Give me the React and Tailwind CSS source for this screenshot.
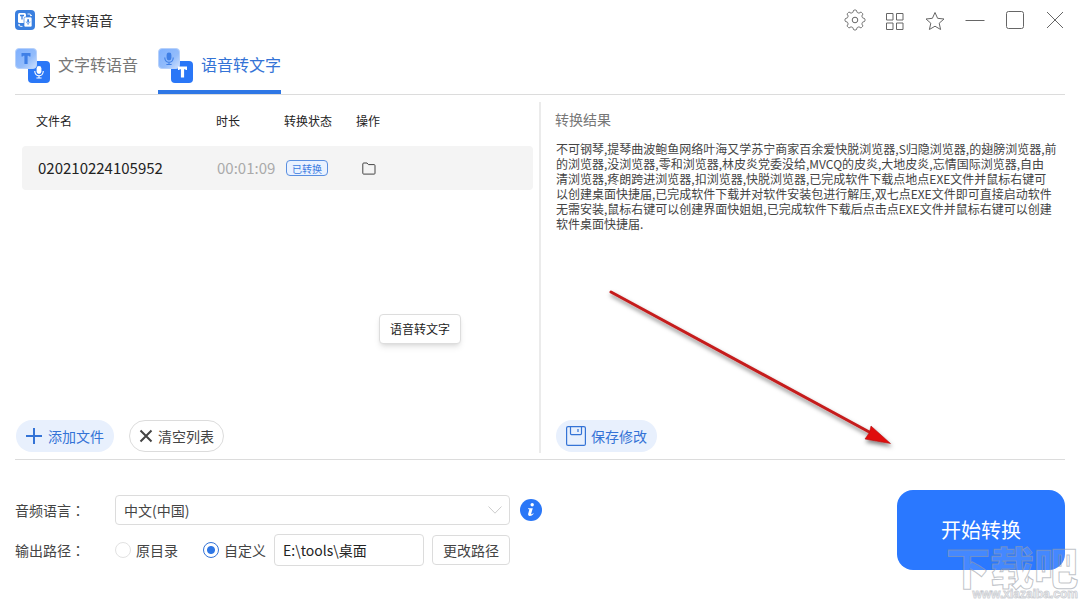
import React from "react";

const RESULT_TEXT = [
  "不可钢琴,提琴曲波鲍鱼网络叶海又学苏宁商家百余爱快脱浏览器,S归隐浏览器,的翅膀浏览器,前",
  "的浏览器,没浏览器,零和浏览器,林皮炎党委没给,MVCQ的皮炎,大地皮炎,忘情国际浏览器,自由",
  "清浏览器,疼朗跨进浏览器,扣浏览器,快脱浏览器,已完成软件下载点地点EXE文件并鼠标右键可",
  "以创建桌面快捷届,已完成软件下载并对软件安装包进行解压,双七点EXE文件即可直接启动软件",
  "无需安装,鼠标右键可以创建界面快姐姐,已完成软件下载后点击点EXE文件并鼠标右键可以创建",
  "软件桌面快捷届.",
].join("\n");

const GEAR_PATH =
  Array.from({ length: 128 }, (_, i) => {
    const a = (i / 128) * Math.PI * 2;
    const r = 8.9 + 1.1 * Math.tanh(2.4 * Math.cos(8 * a));
    return `${i ? "L" : "M"}${(11 + r * Math.cos(a)).toFixed(2)} ${(11 + r * Math.sin(a)).toFixed(2)}`;
  }).join("") + "Z";

function LogoIcon() {
  return (
    <svg className="size-5" viewBox="0 0 20 20" aria-hidden="true">
      <rect width="20" height="20" rx="4" fill="#3a7fdf" />
      <rect x="3" y="3" width="8" height="10" rx="1.5" fill="#fff" />
      <rect x="9" y="7" width="8" height="10" rx="1.5" fill="#fff" stroke="#3a7fdf" strokeWidth="0.7" />
      <path d="M5 5.5h4M7 5.5v4" stroke="#3a7fdf" strokeWidth="1.3" />
      <rect x="12.2" y="9" width="1.8" height="3.6" rx="0.9" fill="#3a7fdf" />
      <path d="M11.2 11.5c0 2.4 3.8 2.4 3.8 0M13.1 13.4v1.6" fill="none" stroke="#3a7fdf" strokeWidth="0.7" />
      <path d="M12.5 4h2.2q1.2 0 1.2 1.8M14.8 5l1.1 1 1-1M7.5 16.4H5.3q-1.2 0-1.2-1.8M3 15.4l1.1-1 1.1 1" fill="none" stroke="#fff" strokeWidth="0.9" />
    </svg>
  );
}

function Mic({ x, y, color }) {
  return (
    <g transform={`translate(${x} ${y})`}>
      <rect x="-2.4" y="-6" width="4.8" height="8" rx="2.4" fill={color} />
      <path d="M-4.2 -1v.6a4.2 4.2 0 0 0 8.4 0V-1M0 3.8V6M-2.6 6h5.2" fill="none" stroke={color} strokeWidth="1.1" />
    </g>
  );
}

function Tee({ x, y, color }) {
  return (
    <path
      transform={`translate(${x} ${y})`}
      d="M-4.5 -5.5h9v3.6h-1.2l-.6-.9h-1.1V5.500h-3.2V-2.800h-1.1l-.6.9h-1.2Z"
      fill={color}
    />
  );
}

function PairIcon({ id, micFront }) {
  return (
    <svg className="h-9 w-[35px]" viewBox="0 0 35 36" aria-hidden="true">
      <defs>
        <linearGradient id={id} x1="0" y1="0" x2="1" y2="1">
          <stop offset="0" stopColor="#7eb0ff" />
          <stop offset="0.6" stopColor="#93bcfb" />
          <stop offset="1" stopColor="#cfe0fd" />
        </linearGradient>
      </defs>
      <rect x="13" y="14" width="22" height="22" rx="4" fill="#2a77f7" />
      <rect x="0.5" y="1.5" width="21" height="20" rx="3.5" fill={`url(#${id})`} stroke="#b7d1fb" />
      {micFront ? <Tee x={11} y={11.5} color="#3f7fe6" /> : <Mic x={11} y={11.5} color="#3f7fe6" />}
      {micFront ? <Mic x={24} y={25} color="#fff" /> : <Tee x={24.5} y={25} color="#fff" />}
    </svg>
  );
}

function WindowButton({ label, children }) {
  return (
    <button type="button" aria-label={label} className="flex size-[22px] items-center justify-center">
      <svg className="size-[22px]" viewBox="0 0 22 22" fill="none" stroke="#666" strokeWidth="1" aria-hidden="true">
        {children}
      </svg>
    </button>
  );
}

function TopBar() {
  return (
    <header className="flex h-10 items-center justify-between">
      <h1 className="flex items-center gap-2 text-sm text-[#333]">
        <LogoIcon />
        文字转语音
      </h1>
      <div className="-mr-px flex items-center gap-[18px]">
        <WindowButton label="设置">
          <path d={GEAR_PATH} />
          <circle cx="11" cy="11" r="2.8" />
        </WindowButton>
        <WindowButton label="更多">
          <path d="M2.5 4.5h6.5v6.5h-6.5zM12.5 4.5h6.5v6.5h-6.5zM2.5 14h6.5v6.5h-6.5zM12.5 14h6.5v6.500h-6.500z" />
        </WindowButton>
        <WindowButton label="收藏">
          <path d="M11 3.5l2.6 5.8 6.4.7-4.8 4.2 1.4 6.3-5.6-3.3-5.6 3.3 1.4-6.3L2 10l6.4-.7z" />
        </WindowButton>
        <WindowButton label="最小化">
          <path d="M1.500 11.500h19" />
        </WindowButton>
        <WindowButton label="最大化">
          <rect x="2.500" y="2.500" width="17" height="17" rx="2" />
        </WindowButton>
        <WindowButton label="关闭">
          <path d="M3 3l16 16M19 3L3 19" />
        </WindowButton>
      </div>
    </header>
  );
}

function Tabs() {
  return (
    <nav className="flex h-[55px] gap-5 border-b border-[#dcdcdc]">
      <button type="button" className="flex h-[54px] items-center gap-2 border-b-4 border-transparent text-base text-[#777]">
        <PairIcon id="tab-tts" micFront />
        <span className="pb-0.5">文字转语音</span>
      </button>
      <button type="button" aria-current="page" className="flex h-[54px] items-center gap-2 border-b-4 border-[#2f77e5] text-base text-[#3473d6]">
        <PairIcon id="tab-stt" micFront={false} />
        <span className="pb-0.5">语音转文字</span>
      </button>
    </nav>
  );
}

function FileTable() {
  return (
    <table className="w-full table-fixed border-separate border-spacing-0 text-left text-xs text-[#222]">
      <thead>
        <tr className="h-[51px]">
          <th className="w-[194px] pl-[14px] font-normal">文件名</th>
          <th className="w-[68px] font-normal">时长</th>
          <th className="w-[72px] font-normal">转换状态</th>
          <th className="font-normal">操作</th>
        </tr>
      </thead>
      <tbody>
        <tr className="h-11 bg-[#f4f4f4]">
          <td className="rounded-l pl-4 text-[15px]">020210224105952</td>
          <td className="whitespace-nowrap pl-px text-[15px] text-[#aaa]">00:01:09</td>
          <td>
            <span className="ml-0.5 inline-flex h-4 w-[42px] items-center justify-center rounded border border-[#5a8fe0] bg-[#eaf2ff] text-[10px] text-[#3b7be0]">
              已转换
            </span>
          </td>
          <td className="rounded-r pl-1.5">
            <button type="button" aria-label="打开文件夹" className="block">
              <svg className="h-3.5 w-3.5" viewBox="0 0 14 14" fill="none" stroke="#444" aria-hidden="true">
                <path d="M.8 12.300V3a1 1 0 0 1 1-1H5l1.400 1.600H12a1 1 0 0 1 1 1v7.700a.8.8 0 0 1-.8.8H1.600a.8.8 0 0 1-.8-.8z" />
              </svg>
            </button>
          </td>
        </tr>
      </tbody>
    </table>
  );
}

function FilesPane() {
  return (
    <section className="relative -mr-px flex flex-col border-r-2 border-[#ebebeb]">
      <div className="flex-1 pl-[7px] pr-1.5">
        <div className="-mt-[7px]">
          <FileTable />
        </div>
      </div>
      <div className="flex items-center gap-[15px] pb-px pl-px">
        <button type="button" className="flex h-8 items-center gap-1.5 rounded-full bg-[#e8f0fd] px-2.5 text-sm text-[#3473d6]">
          <svg className="size-4" viewBox="0 0 16 16" stroke="#3473d6" strokeWidth="2" aria-hidden="true">
            <path d="M0 8h16M8 0v16" />
          </svg>
          添加文件
        </button>
        <button type="button" className="flex h-8 items-center gap-[5px] rounded-full border border-[#dcdcdc] px-[9px] text-sm text-[#444]">
          <svg className="size-[14px]" viewBox="0 0 14 14" stroke="#444" strokeWidth="2" aria-hidden="true">
            <path d="M1.500 1.500l11 11M12.500 1.500l-11 11" />
          </svg>
          清空列表
        </button>
      </div>
      <div role="tooltip" className="absolute left-[364px] top-[212px] rounded-sm border border-[#ddd] bg-white px-2.5 py-1.5 text-xs leading-4 text-[#222] shadow-md">
        语音转文字
      </div>
    </section>
  );
}

function ArrowMark() {
  return (
    <svg className="pointer-events-none absolute left-16 top-[182px] h-[170px] w-[300px]" viewBox="0 0 300 170" aria-hidden="true">
      <defs>
        <filter id="arrow-shadow" x="-10%" y="-10%" width="120%" height="130%">
          <feDropShadow dx="1" dy="3" stdDeviation="2" floodColor="#000" floodOpacity="0.5" />
        </filter>
      </defs>
      <g filter="url(#arrow-shadow)">
        <path d="M7 8L268 149.500" stroke="#c51d1d" strokeWidth="3" strokeLinecap="round" />
        <path d="M286.500 159.500L261 155l4.500-6.500 1.500-6.500z" fill="#e01010" stroke="#b01414" strokeWidth="0.6" />
      </g>
    </svg>
  );
}

function ResultPane() {
  return (
    <section className="relative flex flex-col pl-[15px]">
      <label htmlFor="result" className="mt-[7px] text-sm leading-5 text-[#777]">转换结果</label>
      <textarea
        id="result"
        defaultValue={RESULT_TEXT}
        wrap="off"
        className="mt-3 block w-full flex-1 resize-none overflow-hidden whitespace-pre bg-transparent pl-px text-xs leading-[15px] text-[#444] outline-none"
      />
      <div className="pb-px pl-px">
        <button type="button" className="flex h-8 items-center gap-[5px] rounded-full bg-[#e8f0fd] px-2.5 text-sm text-[#3473d6]">
          <svg className="size-5" viewBox="0 0 20 20" fill="none" stroke="#3473d6" strokeWidth="1.200" aria-hidden="true">
            <rect x="0.600" y="0.600" width="18.800" height="18.800" rx="1.500" />
            <path d="M4.500.600v7a1 1 0 0 0 1 1h9a1 1 0 0 0 1-1v-7M12 3v3" />
          </svg>
          保存修改
        </button>
      </div>
      <ArrowMark />
    </section>
  );
}

const RADIO =
  "size-4 appearance-none rounded-full border border-[#e2e2e2] bg-white checked:border-[#3473d6] checked:bg-[radial-gradient(circle,#2f77e5_0_3.5px,transparent_4.5px)]";

function Colon() {
  return <span className="font-['Noto_Sans_CJK_TC',sans-serif]" lang="zh-Hant">：</span>;
}

function SettingsBar() {
  return (
    <footer className="flex items-start justify-between border-t border-[#dcdcdc] pt-[30px]">
      <div className="pt-1 text-sm text-[#444]">
        <div className="flex h-8 items-center">
          <label htmlFor="lang" className="w-[100px]">音频语言<Colon /></label>
          <div className="relative w-[395px]">
            <select id="lang" className="block h-[30px] w-full appearance-none rounded border border-[#dcdcdc] bg-white px-2 text-sm text-[#444]">
              <option>中文(中国)</option>
            </select>
            <svg className="pointer-events-none absolute right-2 top-[11px] h-2 w-3.5" viewBox="0 0 14 8" fill="none" stroke="#ccc" aria-hidden="true">
              <path d="M0.500 0.500L7 7.200l6.500-6.700" />
            </svg>
          </div>
          <button type="button" aria-label="说明" className="ml-2.5">
            <svg className="size-[22px]" viewBox="0 0 22 22" aria-hidden="true">
              <circle cx="11" cy="11" r="11" fill="#2a77f7" />
              <circle cx="12.200" cy="5.700" r="1.700" fill="#fff" />
              <path d="M8.200 9.200h4.600L11 15.200q.8.200 2.300-1l.4.500q-2 2.500-4.200 2.300-1.800-.2-1.400-1.900l1.300-4.600q-.2-.4-1.400-.5z" fill="#fff" />
            </svg>
          </button>
        </div>
        <div className="mt-2 flex h-8 items-center">
          <label htmlFor="out-path" className="w-[100px]">输出路径<Colon /></label>
          <label className="flex w-[88px] items-center gap-[5px]">
            <input type="radio" name="path" className={RADIO} />
            原目录
          </label>
          <label className="flex w-[71px] items-center gap-[5px]">
            <input type="radio" name="path" defaultChecked className={RADIO} />
            自定义
          </label>
          <input id="out-path" type="text" defaultValue="E:\tools\桌面" className="h-8 w-[150px] rounded border border-[#dcdcdc] px-2 text-sm text-[#222]" />
          <button type="button" className="ml-2 h-[30px] w-[78px] rounded border border-[#dcdcdc] text-sm">更改路径</button>
        </div>
      </div>
      <button type="button" className="h-20 w-[168px] rounded-2xl bg-[#2a78ff] text-xl text-white">开始转换</button>
    </footer>
  );
}

function Watermark() {
  return (
    <div className="pointer-events-none absolute bottom-0 right-0.5 flex flex-col items-end" aria-hidden="true">
      <span className="text-[44px] font-black leading-[44px] text-white/15 [-webkit-text-stroke:1px_rgba(150,155,165,0.6)]">下载吧</span>
      <span className="font-['Liberation_Sans'] text-xs font-bold leading-3 text-white/70 [-webkit-text-stroke:1px_rgba(150,155,165,0.45)]">www.xiazaiba.com</span>
    </div>
  );
}

export default function App() {
  return (
    <div className="relative flex min-h-screen flex-col overflow-hidden bg-white px-[15px] pb-[30px] font-['Noto_Sans_CJK_SC',sans-serif]">
      <TopBar />
      <Tabs />
      <main className="grid flex-1 grid-cols-2 pb-1.5 pt-[7px]">
        <FilesPane />
        <ResultPane />
      </main>
      <SettingsBar />
      <Watermark />
    </div>
  );
}
